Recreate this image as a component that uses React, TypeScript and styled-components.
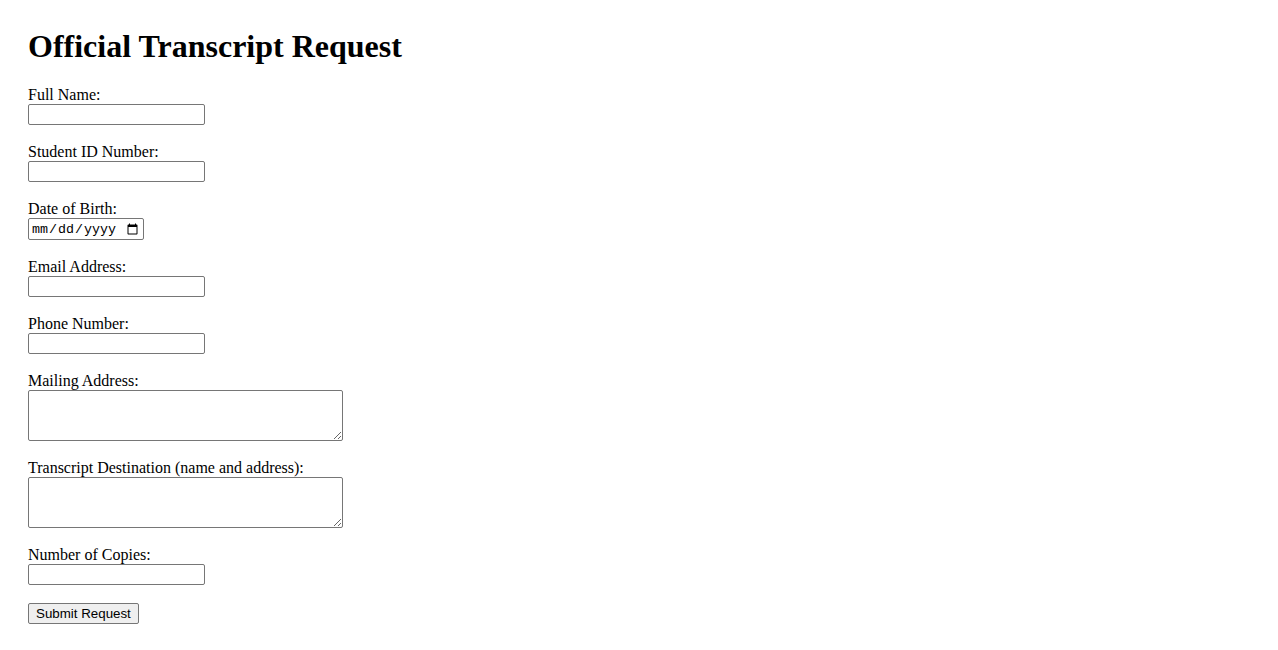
import React from 'react'
import styled, { createGlobalStyle } from 'styled-components'

const GlobalStyle = createGlobalStyle`
body{
    margin:8px;
    background-color:#ffffff;
    color:#000000;
    font-family:"Liberation Serif", "Times New Roman", serif;
    font-size:16px;
}
`
const Page = styled.div`
padding:20px;
`
const Title = styled.h1`
margin:0 0 21.44px 0;
font-size:32px;
font-weight:700;
line-height:normal;
`
const Form = styled.form`
display:flex;
flex-direction:column;
align-items:flex-start;
`
const Field = styled.div`
display:flex;
flex-direction:column;
align-items:flex-start;
margin-bottom:18px;
`
const Label = styled.label`
display:block;
line-height:normal;
`
const TextInput = styled.input<{ $w?: number; $h?: number }>`
box-sizing:border-box;
display:block;
width:${p => p.$w || 177}px;
height:${p => p.$h || 21}px;
margin:0;
padding:1px 2px;
border:1px solid #767676;
border-radius:2px;
background-color:#ffffff;
font-family:"Liberation Sans", Arial, sans-serif;
font-size:13.33px;
`
const DateInput = styled(TextInput)`
font-family:"Liberation Mono", Consolas, monospace;
color:#000000;
`
const TextArea = styled.textarea`
box-sizing:border-box;
display:block;
width:315px;
height:51px;
margin:0;
padding:2px;
border:1px solid #767676;
border-radius:2px;
font-family:"Liberation Mono", monospace;
font-size:13.33px;
resize:both;
`
const SubmitButton = styled.button`
box-sizing:border-box;
height:21px;
margin:0;
padding:1px 7px;
border:1px solid #767676;
border-radius:2px;
background-color:#efefef;
color:#000000;
font-family:"Liberation Sans", Arial, sans-serif;
font-size:13.33px;
line-height:normal;
`

export default function App() {
    return (
        <Page>
            <GlobalStyle />
            <Title>Official Transcript Request</Title>
            <Form onSubmit={(e) => e.preventDefault()}>
                <Field>
                    <Label htmlFor="fullName">Full Name:</Label>
                    <TextInput id="fullName" type="text" />
                </Field>
                <Field>
                    <Label htmlFor="studentId">Student ID Number:</Label>
                    <TextInput id="studentId" type="text" />
                </Field>
                <Field>
                    <Label htmlFor="dob">Date of Birth:</Label>
                    <DateInput id="dob" type="date" $w={116} $h={22} />
                </Field>
                <Field>
                    <Label htmlFor="email">Email Address:</Label>
                    <TextInput id="email" type="email" />
                </Field>
                <Field>
                    <Label htmlFor="phone">Phone Number:</Label>
                    <TextInput id="phone" type="tel" />
                </Field>
                <Field>
                    <Label htmlFor="mailing">Mailing Address:</Label>
                    <TextArea id="mailing" />
                </Field>
                <Field>
                    <Label htmlFor="destination">Transcript Destination (name and address):</Label>
                    <TextArea id="destination" />
                </Field>
                <Field>
                    <Label htmlFor="copies">Number of Copies:</Label>
                    <TextInput id="copies" type="number" />
                </Field>
                <SubmitButton type="submit">Submit Request</SubmitButton>
            </Form>
        </Page>
    )
}
